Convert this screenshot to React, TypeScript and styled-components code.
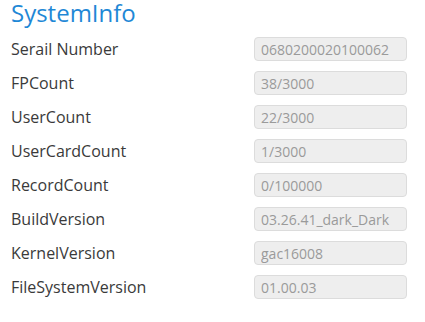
import React from 'react'
import styled, { createGlobalStyle } from 'styled-components'

type InfoRow = {
  label: string
  value: string
}

const TITLE_BLUE = '#1f88d6'
const LABEL_TEXT = '#3a3a3a'
const FIELD_BG = '#eeeeee'
const FIELD_BORDER = '#dcdcdc'
const FIELD_TEXT = '#9a9a9a'

const ROWS: InfoRow[] = [
  { label: 'Serail Number', value: '0680200020100062' },
  { label: 'FPCount', value: '38/3000' },
  { label: 'UserCount', value: '22/3000' },
  { label: 'UserCardCount', value: '1/3000' },
  { label: 'RecordCount', value: '0/100000' },
  { label: 'BuildVersion', value: '03.26.41_dark_Dark' },
  { label: 'KernelVersion', value: 'gac16008' },
  { label: 'FileSystemVersion', value: '01.00.03' },
]

const GlobalStyle = createGlobalStyle`
  html, body {
    margin: 0;
    padding: 0;
    background: #ffffff;
  }
  body {
    font-family: 'Open Sans', 'Noto Sans', sans-serif;
  }
`

const Panel = styled.div`
  width: 425px;
  height: 322px;
  box-sizing: border-box;
  padding: 0 0 0 11px;
  background: #ffffff;
`

const Title = styled.h2`
  margin: 0;
  height: 37px;
  font-size: 24px;
  font-weight: 400;
  line-height: 25px;
  color: ${TITLE_BLUE};
`

const InfoGrid = styled.div`
  display: grid;
  grid-template-columns: 243px 153px;
  grid-auto-rows: 24px;
  row-gap: 10px;
  align-items: center;
`

const Label = styled.div`
  font-size: 16px;
  color: ${LABEL_TEXT};
  line-height: 22px;
  white-space: nowrap;
`

const Field = styled.input`
  box-sizing: border-box;
  width: 153px;
  height: 24px;
  margin: 0;
  padding: 0 6px;
  border: 1px solid ${FIELD_BORDER};
  border-radius: 4px;
  background: ${FIELD_BG};
  font-family: inherit;
  font-size: 14px;
  color: ${FIELD_TEXT};
  outline: none;
`

const App: React.FC = () => {
  return (
    <>
      <GlobalStyle />
      <Panel>
        <Title>SystemInfo</Title>
        <InfoGrid>
          {ROWS.map((row) => (
            <React.Fragment key={row.label}>
              <Label>{row.label}</Label>
              <Field value={row.value} readOnly />
            </React.Fragment>
          ))}
        </InfoGrid>
      </Panel>
    </>
  )
}

export default App
